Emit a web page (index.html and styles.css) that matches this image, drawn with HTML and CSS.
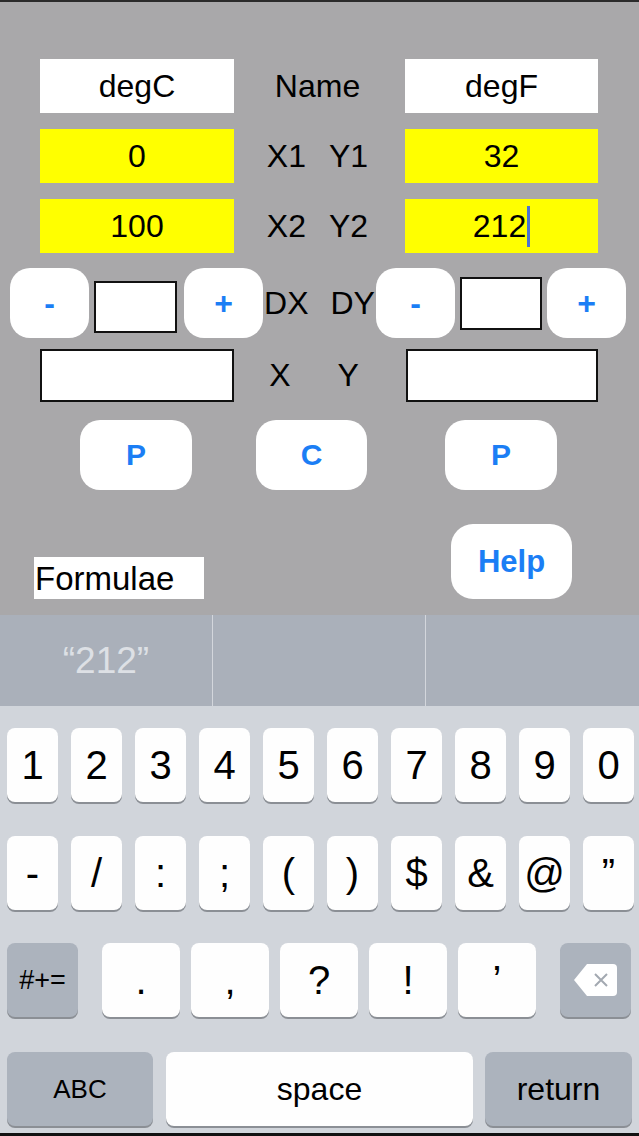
FILE: index.html
```html
<!DOCTYPE html>
<html>
<head>
<meta charset="utf-8">
<link rel="stylesheet" href="styles.css">
</head>
<body>
<div class="screen">
  <div class="app">
    <div class="row r1">
      <div class="field white wide l">degC</div>
      <div class="labels mid"><span>Name</span></div>
      <div class="field white wide">degF</div>
    </div>
    <div class="row r2">
      <div class="field yellow wide l">0</div>
      <div class="labels mid pair"><span>X1</span><span>Y1</span></div>
      <div class="field yellow wide">32</div>
    </div>
    <div class="row r3">
      <div class="field yellow wide l">100</div>
      <div class="labels mid pair"><span>X2</span><span>Y2</span></div>
      <div class="field yellow wide">212<span class="caret"></span></div>
    </div>
    <div class="row r4">
      <div class="btn small">-</div>
      <div class="box step lstep"></div>
      <div class="btn small plus1">+</div>
      <div class="labels dxdy"><span>DX</span><span>DY</span></div>
      <div class="btn small">-</div>
      <div class="box step rstep"></div>
      <div class="btn small plus2">+</div>
    </div>
    <div class="row r5">
      <div class="box wide l"></div>
      <div class="labels xy"><span>X</span><span>Y</span></div>
      <div class="box wide rbox"></div>
    </div>
    <div class="row r6">
      <div class="btn mbtn p1">P</div>
      <div class="btn mbtn c1">C</div>
      <div class="btn mbtn p2">P</div>
    </div>
    <div class="row r7">
      <div class="formulae">Formulae</div>
      <div class="btn help">Help</div>
    </div>
  </div>
  <div class="suggest">
    <div class="cell">“212”</div>
    <div class="cell"></div>
    <div class="cell"></div>
  </div>
  <div class="kbd">
    <div class="krow k1">
      <div class="key">1</div><div class="key">2</div><div class="key">3</div><div class="key">4</div><div class="key">5</div>
      <div class="key">6</div><div class="key">7</div><div class="key">8</div><div class="key">9</div><div class="key">0</div>
    </div>
    <div class="krow k2">
      <div class="key">-</div><div class="key">/</div><div class="key">:</div><div class="key">;</div><div class="key">(</div>
      <div class="key">)</div><div class="key">$</div><div class="key">&amp;</div><div class="key">@</div><div class="key">”</div>
    </div>
    <div class="krow k3">
      <div class="key special sym">#+=</div>
      <div class="mids">
        <div class="key m">.</div><div class="key m">,</div><div class="key m">?</div><div class="key m">!</div><div class="key m">’</div>
      </div>
      <div class="key special del">
        <svg width="43" height="32" viewBox="0 0 43 32"><path d="M13 0 H39 Q43 0 43 4 V28 Q43 32 39 32 H13 L0 16 Z" fill="#fff"/><path d="M21 10 L33 22 M33 10 L21 22" stroke="#a3a9b1" stroke-width="2"/></svg>
      </div>
    </div>
    <div class="krow k4">
      <div class="key special abc">ABC</div>
      <div class="key space">space</div>
      <div class="key special ret">return</div>
    </div>
  </div>
</div>
</body>
</html>
```
FILE: styles.css
```css
html, body {
  margin: 0;
  padding: 0;
}
body {
  width: 639px;
  height: 1136px;
  overflow: hidden;
  font-family: "Liberation Sans", Arial, sans-serif;
}
.screen {
  width: 639px;
  height: 1136px;
  display: flex;
  flex-direction: column;
  background: #000;
}
.app {
  height: 615px;
  box-sizing: border-box;
  background: #a9a8aa;
  border-top: 2px solid #2b2b2b;
  padding-top: 57px;
  display: flex;
  flex-direction: column;
}
.row {
  display: flex;
  flex: none;
}
.r1, .r2, .r3 { height: 54px; }
.r2, .r3 { margin-top: 16px; }
.r4 { margin-top: 15px; height: 70px; padding-left: 10px; align-items: flex-start; }
.r5 { margin-top: 11px; height: 53px; }
.r6 { margin-top: 18px; height: 70px; }
.r7 { margin-top: 34px; height: 76px; align-items: flex-end; }

.field {
  display: flex;
  align-items: center;
  justify-content: center;
  font-size: 32px;
  color: #000;
}
.wide { width: 193px; }
.l { margin-left: 40px; width: 194px; }
.white { background: #fff; }
.yellow { background: #ffff00; }
.caret {
  display: inline-block;
  width: 3px;
  height: 41px;
  background: #4a72d4;
  margin-left: 1px;
}
.labels {
  display: flex;
  align-items: center;
  justify-content: center;
  font-size: 32px;
  color: #000;
}
.mid { width: 171px; padding-right: 4px; box-sizing: border-box; }
.pair { gap: 23px; }
.dxdy { width: 113px; gap: 22px; height: 70px; }
.xy { width: 172px; gap: 47px; padding-right: 12px; box-sizing: border-box; }
.rbox { width: 192px; }

.btn {
  background: #fff;
  color: #1b7ef5;
  font-weight: bold;
  font-size: 30px;
  display: flex;
  align-items: center;
  justify-content: center;
  border-radius: 20px;
}
.small { width: 79px; height: 70px; font-size: 32px; }
.box {
  background: #fff;
  border: 2px solid #111;
  box-sizing: border-box;
  height: 53px;
}
.step { width: 83px; height: 52px; }
.lstep { margin-left: 5px; margin-top: 13px; }
.rstep { margin-left: 5px; margin-top: 9px; width: 82px; height: 53px; }
.plus1 { margin-left: 7px; }
.plus2 { margin-left: 5px; }
.mbtn { width: 112px; height: 70px; }
.p1 { margin-left: 80px; }
.c1 { margin-left: 64px; width: 111px; }
.p2 { margin-left: 78px; }

.formulae {
  margin-left: 34px;
  margin-bottom: 1px;
  width: 170px;
  height: 42px;
  background: #fff;
  font-size: 33px;
  line-height: 44px;
  padding-left: 1px;
  box-sizing: border-box;
  color: #000;
}
.help {
  margin-left: 247px;
  margin-bottom: 1px;
  width: 121px;
  height: 75px;
  border-radius: 22px;
  font-size: 31px;
}

.suggest {
  height: 91px;
  flex: none;
  background: #aab0ba;
  display: flex;
}
.cell {
  width: 212px;
  display: flex;
  align-items: center;
  justify-content: center;
  color: #dde0e5;
  font-size: 37px;
  border-right: 1px solid #d3d6dc;
}
.cell:last-child { border-right: none; flex: 1; }

.kbd {
  flex: none;
  background: #d1d5db;
  border-bottom: 3px solid #111;
  padding-top: 22px;
  box-sizing: content-box;
  display: flex;
  flex-direction: column;
  height: 405px;
}
.krow {
  display: flex;
  padding-left: 7px;
  height: 76px;
  flex: none;
}
.k1 { gap: 13px; }
.k2 { gap: 13px; margin-top: 32px; }
.k3 { margin-top: 31px; }
.k4 { margin-top: 33px; gap: 13px; }
.key {
  width: 51px;
  height: 74px;
  background: #fefefe;
  border-radius: 8px;
  box-shadow: 0 2px 0 #8b8f95;
  display: flex;
  align-items: center;
  justify-content: center;
  font-size: 40px;
  color: #000;
}
.special { background: #acb3bd; }
.sym { width: 71px; font-size: 27px; }
.mids {
  display: flex;
  gap: 11px;
  margin-left: 24px;
}
.m { width: 78px; }
.del { width: 71px; margin-left: 24px; }
.abc { width: 146px; font-size: 26px; }
.space { width: 307px; font-size: 32px; }
.ret { width: 147px; font-size: 32px; margin-left: -1px; }
```
